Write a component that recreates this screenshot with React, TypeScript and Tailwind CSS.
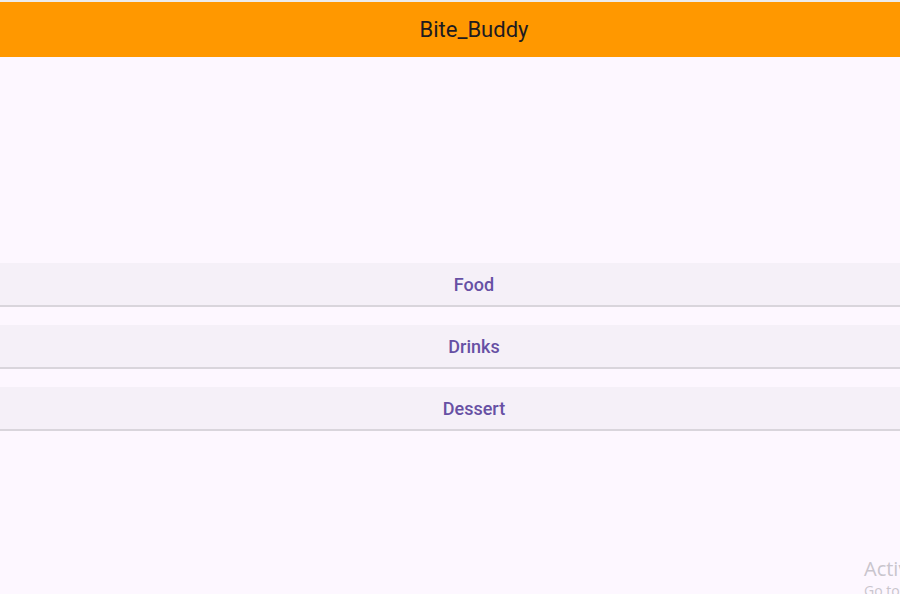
import React from "react";

export default function App() {
  const items = ["Food", "Drinks", "Dessert"];
  return (
    <div className="relative w-[900px] h-[594px] overflow-hidden bg-[#fdf7ff]" style={{ fontFamily: "Roboto, sans-serif" }}>
      <div className="w-[948px]">
        <div className="h-[2px] bg-[#ececec]" />
        <div className="h-[55px] bg-[#ff9800] flex items-center justify-center">
          <span className="text-[22px] text-[#1d1b20] leading-none">Bite_Buddy</span>
        </div>
        <div className="pt-[206px] flex flex-col gap-[18px]">
          {items.map((t) => (
            <div key={t} className="h-[44px] bg-[#f5f0f8] border-b-2 border-[#d9d5dc] flex items-center justify-center">
              <span className="text-[18px] font-medium text-[#6750a4]">{t}</span>
            </div>
          ))}
        </div>
      </div>
      <div className="absolute left-[864px] top-[556px] whitespace-nowrap text-[#c9c5cd]" style={{ fontFamily: "'Open Sans', sans-serif" }}>
        <div className="text-[20px] leading-[26px]">Activate Windows</div>
        <div className="text-[14px] leading-[18px]">Go to Settings to activate Windows.</div>
      </div>
    </div>
  );
}
